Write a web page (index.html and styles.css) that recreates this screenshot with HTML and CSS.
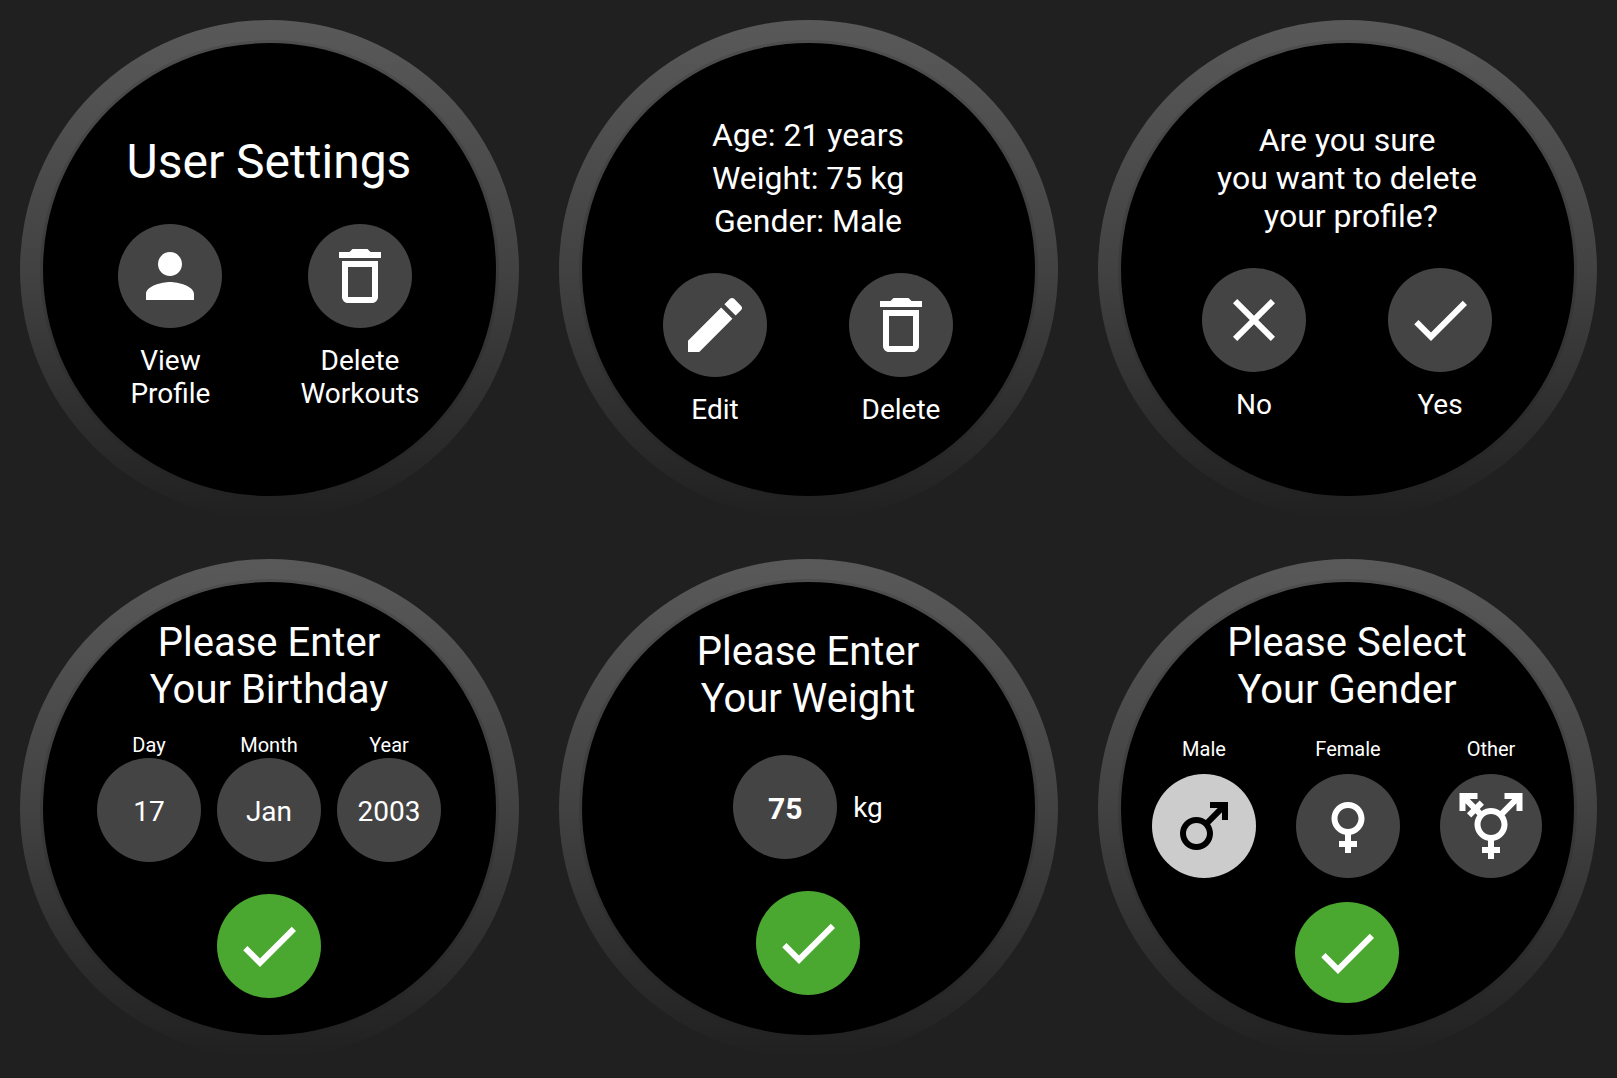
FILE: index.html
```html
<!DOCTYPE html>
<html lang="en">
<head>
<meta charset="utf-8">
<meta name="viewport" content="width=device-width, initial-scale=1">
<title>User Settings</title>
<link rel="stylesheet" href="styles.css">
</head>
<body>
<svg class="sprite" aria-hidden="true">
  <symbol id="person" viewBox="0 0 24 24"><path d="M12 12c2.21 0 4-1.79 4-4s-1.79-4-4-4-4 1.79-4 4 1.79 4 4 4zm0 2c-2.67 0-8 1.34-8 4v2h16v-2c0-2.66-5.33-4-8-4z"/></symbol>
  <symbol id="trash" viewBox="0 0 24 24"><path d="M6 19c0 1.1.9 2 2 2h8c1.1 0 2-.9 2-2V7H6v12zM8 9h8v10H8V9zm7.5-5l-1-1h-5l-1 1H5v2h14V4h-3.5z"/></symbol>
  <symbol id="edit" viewBox="0 0 24 24"><path d="M3 17.25V21h3.75L17.81 9.94l-3.75-3.75L3 17.25zM20.71 7.04c.39-.39.39-1.02 0-1.41l-2.34-2.34c-.39-.39-1.02-.39-1.41 0l-1.83 1.83 3.75 3.75 1.83-1.83z"/></symbol>
  <symbol id="close" viewBox="0 0 24 24"><path d="M19 6.41L17.59 5 12 10.59 6.41 5 5 6.41 10.59 12 5 17.59 6.41 19 12 13.41 17.59 19 19 17.59 13.41 12z"/></symbol>
  <symbol id="check" viewBox="0 0 24 24"><path d="M9 16.17L4.83 12l-1.42 1.41L9 19 21 7l-1.41-1.41z"/></symbol>
  <symbol id="male" viewBox="0 0 24 24"><path d="M9.5 11c1.93 0 3.5 1.57 3.5 3.5S11.43 18 9.5 18 6 16.43 6 14.5 7.57 11 9.5 11zm0-2C6.46 9 4 11.46 4 14.5S6.46 20 9.5 20s5.5-2.46 5.5-5.5c0-1.16-.36-2.23-.97-3.12L18 7.42V10h2V4h-6v2h2.58l-3.97 3.97C11.73 9.36 10.66 9 9.5 9z"/></symbol>
  <symbol id="female" viewBox="0 0 24 24"><path d="M17.5 9.5C17.5 6.46 15.04 4 12 4S6.5 6.46 6.5 9.5c0 2.7 1.94 4.93 4.5 5.4V17H9v2h2v2h2v-2h2v-2h-2v-2.1c2.56-.47 4.5-2.7 4.5-5.4zm-9 0C8.5 7.57 10.07 6 12 6s3.5 1.57 3.5 3.5S13.93 13 12 13s-3.5-1.57-3.5-3.5z"/></symbol>
  <symbol id="other" viewBox="0 0 24 24"><path d="M12 8c1.93 0 3.5 1.57 3.5 3.5S13.93 15 12 15s-3.5-1.57-3.5-3.5S10.07 8 12 8zm4.53.38 3.97-3.96V7h2V1h-6v2h2.58l-3.97 3.97C14.23 6.36 13.16 6 12 6s-2.23.36-3.11.97l-.65-.65 1.41-1.41-1.41-1.42L6.82 4.9 4.92 3H7.5V1h-6v6h2V4.42l1.91 1.9-1.42 1.42L5.4 9.15l1.41-1.41.65.65c-.6.88-.96 1.95-.96 3.11 0 2.7 1.94 4.94 4.5 5.41V19H9v2h2v2h2v-2h2v-2h-2v-2.09c2.56-.47 4.5-2.71 4.5-5.41 0-1.16-.36-2.23-.97-3.12z"/></symbol>
</svg>

<main class="watches">
  <section class="watch">
    <div class="screen screen-menu">
      <h1 class="title-large">User Settings</h1>
      <div class="actions actions-menu">
        <button class="action" type="button">
          <span class="round"><svg class="icon"><use href="#person"/></svg></span>
          <span>View<br>Profile</span>
        </button>
        <button class="action" type="button">
          <span class="round"><svg class="icon"><use href="#trash"/></svg></span>
          <span>Delete<br>Workouts</span>
        </button>
      </div>
    </div>
  </section>

  <section class="watch">
    <div class="screen screen-profile">
      <p class="details">Age: 21 years<br>Weight: 75 kg<br>Gender: Male</p>
      <div class="actions">
        <button class="action" type="button">
          <span class="round"><svg class="icon"><use href="#edit"/></svg></span>
          <span>Edit</span>
        </button>
        <button class="action" type="button">
          <span class="round"><svg class="icon"><use href="#trash"/></svg></span>
          <span>Delete</span>
        </button>
      </div>
    </div>
  </section>

  <section class="watch">
    <div class="screen screen-confirm">
      <p class="question">Are you sure<br>you want to delete<br>&nbsp;your profile?</p>
      <div class="actions">
        <button class="action" type="button">
          <span class="round"><svg class="icon"><use href="#close"/></svg></span>
          <span>No</span>
        </button>
        <button class="action" type="button">
          <span class="round"><svg class="icon"><use href="#check"/></svg></span>
          <span>Yes</span>
        </button>
      </div>
    </div>
  </section>

  <section class="watch">
    <form class="screen screen-birthday">
      <h2 class="title">Please Enter<br>Your Birthday</h2>
      <div class="date">
        <label class="field"><span>Day</span><input class="round value" type="text" value="17"></label>
        <label class="field"><span>Month</span><input class="round value" type="text" value="Jan"></label>
        <label class="field"><span>Year</span><input class="round value" type="text" value="2003"></label>
      </div>
      <button class="round submit" type="button" aria-label="Confirm"><svg class="icon"><use href="#check"/></svg></button>
    </form>
  </section>

  <section class="watch">
    <form class="screen screen-weight">
      <h2 class="title">Please Enter<br>Your Weight</h2>
      <div class="weight">
        <input class="round value value-bold" id="weight" type="text" value="75">
        <label for="weight">kg</label>
      </div>
      <button class="round submit" type="button" aria-label="Confirm"><svg class="icon"><use href="#check"/></svg></button>
    </form>
  </section>

  <section class="watch">
    <form class="screen screen-gender">
      <h2 class="title">Please Select<br>Your Gender</h2>
      <div class="genders">
        <label class="field field-gender"><span>Male</span><input class="choice" type="radio" name="gender" checked><span class="round"><svg class="icon"><use href="#male"/></svg></span></label>
        <label class="field field-gender"><span>Female</span><input class="choice" type="radio" name="gender"><span class="round"><svg class="icon"><use href="#female"/></svg></span></label>
        <label class="field field-gender"><span>Other</span><input class="choice" type="radio" name="gender"><span class="round round-narrow"><svg class="icon"><use href="#other"/></svg></span></label>
      </div>
      <button class="round round-short submit" type="button" aria-label="Confirm"><svg class="icon"><use href="#check"/></svg></button>
    </form>
  </section>
</main>
</body>
</html>
```
FILE: styles.css
```css
* {
  box-sizing: border-box;
}

body {
  margin: 0;
  background: #202020;
  color: #fff;
  font-family: Roboto, "Liberation Sans", sans-serif;
}

h1,
h2,
p {
  margin: 0;
  font-weight: 400;
}

button,
input {
  margin: 0;
  padding: 0;
  border: 0;
  color: inherit;
  font: inherit;
}

.sprite {
  display: none;
}

.watches {
  display: grid;
  grid-template-columns: repeat(auto-fit, minmax(480px, 1fr));
  gap: 40px;
  padding: 20px;
}

/* Round case: the bezel fades into the page towards the bottom */
.watch {
  aspect-ratio: 1;
  padding: 20px;
  border-radius: 50%;
  background: linear-gradient(#595959, #424242 50%, #202020);
}

/* The border is the bezel's inner lip, a shade darker than the bezel */
.screen {
  display: flex;
  flex-direction: column;
  align-items: center;
  height: 100%;
  padding-right: 1px;
  border: 3px solid transparent;
  border-radius: 50%;
  background:
    linear-gradient(#000, #000) padding-box,
    linear-gradient(#4e4e4e, #3b3b3b 50%, #222) border-box;
  text-align: center;
}

.screen-menu {
  gap: 34px;
  padding-top: 91px;
}

.screen-profile {
  gap: 30px;
  padding-top: 71px;
}

.screen-confirm {
  gap: 33px;
  padding-top: 78px;
}

.screen-birthday {
  padding-top: 37px;
}

.screen-weight {
  padding-top: 46px;
}

.screen-gender {
  padding-top: 37px;
}

.title-large {
  font-size: 48px;
  line-height: 56px;
}

.title {
  font-size: 40px;
  line-height: 47px;
}

.details {
  font-size: 32px;
  line-height: 43px;
}

.question {
  font-size: 32px;
  line-height: 38px;
}

.actions {
  display: flex;
  align-items: flex-start;
  gap: 82px;
}

.actions-menu {
  gap: 78px;
}

.action {
  display: flex;
  flex-direction: column;
  align-items: center;
  gap: 16px;
  background: none;
  font-size: 28px;
  line-height: 33px;
}

.round {
  display: flex;
  flex: none;
  align-items: center;
  justify-content: center;
  width: 104px;
  height: 104px;
  border-radius: 50%;
  background: #444;
}

.round-narrow {
  width: 102px;
}

.round-short {
  height: 101px;
}

.icon {
  width: 72px;
  height: 72px;
  fill: currentColor;
}

.submit {
  margin-top: 32px;
  background: #4aa72f;
}

.screen-gender .submit {
  margin-top: 24px;
}

.field {
  display: flex;
  flex-direction: column;
  align-items: center;
  gap: 1px;
  font-size: 20px;
  line-height: 24px;
}

.value {
  padding-top: 2px;
  font-size: 28px;
  text-align: center;
}

.value-bold {
  font-size: 30px;
  font-weight: 700;
}

.date {
  display: flex;
  gap: 16px;
  margin-top: 20px;
}

.weight {
  display: flex;
  align-items: center;
  gap: 16px;
  margin-top: 33px;
  font-size: 28px;
  line-height: 33px;
}

.genders {
  display: flex;
  gap: 40px;
  margin-top: 24px;
}

.field-gender {
  position: relative;
  gap: 13px;
}

.choice {
  position: absolute;
  opacity: 0;
}

.choice:checked + .round {
  background: #ccc;
  color: #000;
}
```
